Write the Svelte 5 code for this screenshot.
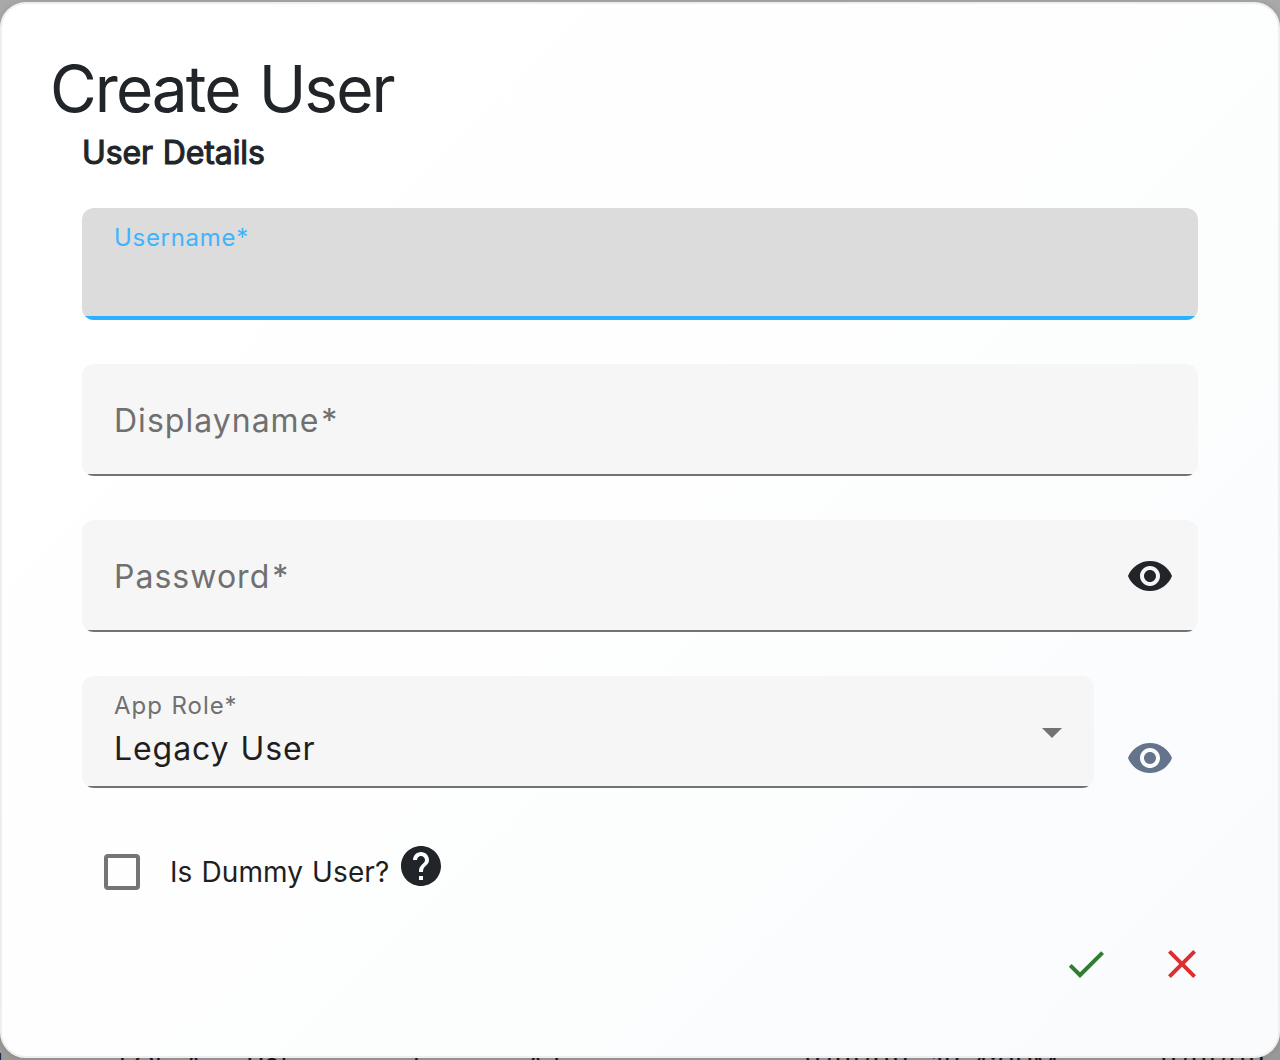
<script lang="ts">
  const behind = [
    { x: -22, text: 'M' },
    { x: 119, text: 'l Ol' },
    { x: 184, text: 'A' },
    { x: 246, text: 'Rol' },
    { x: 413, text: 'l' },
    { x: 526, text: 'A l' },
    { x: 804, text: '8/8l/08', wide: true },
    { x: 932, text: '18' },
    { x: 971, text: '4:0PM' },
    { x: 1160, text: '8/8l/08', wide: true },
  ];
  const eye =
    'M12 4.5C7 4.5 2.73 7.61 1 12c1.73 4.39 6 7.5 11 7.5s9.27-3.11 11-7.5c-1.73-4.39-6-7.5-11-7.5zM12 17c-2.76 0-5-2.24-5-5s2.24-5 5-5 5 2.24 5 5-2.24 5-5 5zm0-8c-1.66 0-3 1.34-3 3s1.34 3 3 3 3-1.34 3-3-1.34-3-3-3z';
</script>

<div class="page">
  <div class="behind" aria-hidden="true">
    {#each behind as item}
      <span class:wide={item.wide} style:left="{item.x}px">{item.text}</span>
    {/each}
  </div>
  <main class="dialog">
    <h1>Create User</h1>
    <section>
      <h2>User Details</h2>
      <div class="field focused"><span class="label small">Username*</span></div>
      <div class="field"><span class="label">Displayname<span class="star">*</span></span></div>
      <div class="field">
        <span class="label">Password<span class="star">*</span></span>
        <svg class="eye" viewBox="0 0 24 24"><path d={eye} /></svg>
      </div>
      <div class="role-row">
        <div class="field select">
          <div class="stack">
            <span class="label small role-label">App Role*</span>
            <span class="value">Legacy User</span>
          </div>
          <svg class="arrow" viewBox="0 0 20 10"><path d="M0 0h20L10 10z" /></svg>
        </div>
        <svg class="eye muted" viewBox="0 0 24 24"><path d={eye} /></svg>
      </div>
      <div class="check-row">
        <span class="box"></span>
        <span class="check-label">Is Dummy User?</span>
        <svg class="help" viewBox="0 0 24 24"><path d="M12 2C6.48 2 2 6.48 2 12s4.48 10 10 10 10-4.48 10-10S17.52 2 12 2zm1 17h-2v-2h2v2zm2.07-7.75l-.9.92C13.45 12.9 13 13.5 13 15h-2v-.5c0-1.1.45-2.1 1.17-2.83l1.24-1.26c.37-.36.59-.86.59-1.41 0-1.1-.9-2-2-2s-2 .9-2 2H8c0-2.21 1.79-4 4-4s4 1.79 4 4c0 .88-.36 1.68-.93 2.25z" /></svg>
      </div>
    </section>
    <div class="actions">
      <svg class="ok" viewBox="0 0 24 24"><path d="M9 16.17L4.83 12l-1.42 1.41L9 19 21 7l-1.41-1.41z" /></svg>
      <svg class="cancel" viewBox="0 0 24 24"><path d="M19 6.41L17.59 5 12 10.59 6.41 5 5 6.41 10.59 12 5 17.59 6.41 19 12 13.41 17.59 19 19 17.59 13.41 12z" /></svg>
    </div>
  </main>
</div>

<style>
  :global(body) { margin: 0; }
  .page {
    position: relative;
    box-sizing: border-box;
    width: 1280px;
    height: 1060px;
    padding: 2px 0;
    overflow: hidden;
    background: linear-gradient(#a9a9ab, #999);
    font-family: Inter, sans-serif;
    color: #212529;
  }
  .behind span {
    position: absolute;
    top: 1050px;
    font-size: 28px;
    line-height: 28px;
    color: #151515;
    white-space: nowrap;
  }
  .behind .wide { letter-spacing: 1.4px; }
  .dialog {
    position: relative;
    box-sizing: border-box;
    height: 1056px;
    padding: 45px 80px 0;
    border: 2px solid #efefef;
    border-radius: 26px;
    background: linear-gradient(135deg, #fff 0%, #fdfefd 50%, #fcfefd 64%, #fbfcfe 76%, #fafbfd 100%);
    box-shadow: 0 0 6px rgba(0, 0, 0, 0.12);
  }
  h1 {
    margin: 0 0 0 -32px;
    font-size: 64px;
    line-height: 80px;
    font-weight: 400;
    letter-spacing: -1.95px;
    word-spacing: 3px;
  }
  h2 {
    margin: 4px 0 36px;
    font-size: 32px;
    line-height: 39px;
    font-weight: 400;
    letter-spacing: -0.12px;
    word-spacing: 1px;
    -webkit-text-stroke: 1.1px #212529;
  }
  .field {
    position: relative;
    box-sizing: border-box;
    display: flex;
    align-items: center;
    justify-content: space-between;
    height: 112px;
    margin-bottom: 44px;
    padding: 0 24px 0 32px;
    border-radius: 12px;
    overflow: hidden;
    background: #f6f6f6;
  }
  .field::after {
    content: '';
    position: absolute;
    inset: auto 0 0;
    height: 2px;
    background: #737373;
  }
  .focused { align-items: flex-start; padding-top: 15px; background: #dcdcdc; }
  .focused::after { height: 4px; background: #29b0ff; }
  .focused .label { color: #40b4fc; }
  .label { font-size: 32px; line-height: 40px; letter-spacing: 1.02px; color: #707070; }
  .star { margin-left: 2px; }
  .field > .label:not(.small) { padding-top: 2px; }
  .label.small { font-size: 24px; line-height: 30px; letter-spacing: 0.7px; }
  .label.role-label { letter-spacing: 0.95px; word-spacing: 1px; }
  .stack { display: flex; flex-direction: column; gap: 8px; padding-bottom: 4px; }
  .value { font-size: 32px; line-height: 40px; letter-spacing: 0.92px; word-spacing: 1px; color: #1f1f1f; }
  .eye { width: 48px; height: 48px; fill: #212529; }
  .muted { fill: #64748b; margin-bottom: 6px; }
  .role-row { display: flex; align-items: flex-end; justify-content: space-between; padding-right: 24px; }
  .role-row .select { width: 1012px; margin-bottom: 0; padding-right: 32px; }
  .arrow { width: 20px; height: 10px; margin-top: 2px; fill: #737373; }
  .check-row { display: flex; align-items: center; height: 80px; margin-top: 44px; padding-left: 22px; }
  .box { box-sizing: border-box; width: 36px; height: 36px; border: 4px solid #757575; border-radius: 4px; }
  .check-label { width: 219px; margin-left: 30px; font-size: 28px; line-height: 40px; letter-spacing: 0.1px; word-spacing: 1px; color: #1f1f1f; white-space: nowrap; }
  .help { width: 48px; height: 48px; margin: -12px 0 0 8px; fill: #212529; }
  .actions { display: flex; justify-content: flex-end; gap: 48px; margin-top: 28px; }
  .actions svg { width: 48px; height: 48px; }
  .ok { fill: #2e7d32; }
  .cancel { fill: #dc3030; margin-right: -8px; }
</style>
